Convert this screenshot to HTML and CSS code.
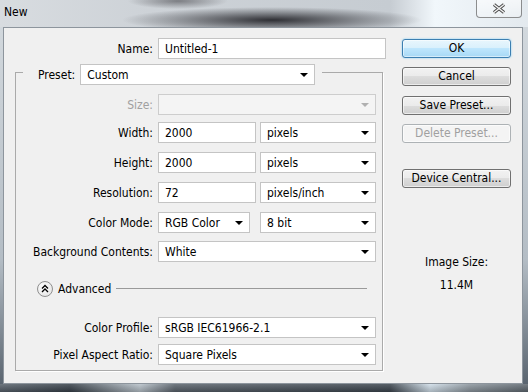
FILE: index.html
```html
<!DOCTYPE html>
<html lang="en">

<head>
    <meta charset="UTF-8">
    <title>New</title>
    <link rel="stylesheet" href="styles.css">
</head>

<body>
    <div class="window">
        <div class="titlebar">
            <span class="title">New</span>
            <button class="close">
                <svg width="16" height="11" viewBox="0 0 16 11">
                    <path d="M3 1.5 L13 9.5 M13 1.5 L3 9.5" stroke="#4a4a4a" stroke-width="3.4" fill="none" />
                    <path d="M3 1.5 L13 9.5 M13 1.5 L3 9.5" stroke="#f4f4f4" stroke-width="1.4" fill="none" />
                </svg>
            </button>
        </div>

        <div class="frame">
            <div class="client">
                <div class="main">
                    <div class="row">
                        <span class="lbl">Name:</span>
                        <div class="field w-name">Untitled-1</div>
                    </div>

                    <div class="group">
                        <div class="group-head">
                            <span class="head-lbl">Preset:</span>
                            <div class="field select w-preset">Custom</div>
                        </div>

                        <div class="row r-size">
                            <span class="lbl dim">Size:</span>
                            <div class="field select disabled w-full"></div>
                        </div>
                        <div class="row r-width">
                            <span class="lbl">Width:</span>
                            <div class="field w-num">2000</div>
                            <div class="field select w-unit">pixels</div>
                        </div>
                        <div class="row">
                            <span class="lbl">Height:</span>
                            <div class="field w-num">2000</div>
                            <div class="field select w-unit">pixels</div>
                        </div>
                        <div class="row">
                            <span class="lbl">Resolution:</span>
                            <div class="field w-num">72</div>
                            <div class="field select w-unit">pixels/inch</div>
                        </div>
                        <div class="row">
                            <span class="lbl">Color Mode:</span>
                            <div class="field select w-mode">RGB Color</div>
                            <div class="field select w-unit bits">8 bit</div>
                        </div>
                        <div class="row r-bg">
                            <span class="lbl">Background Contents:</span>
                            <div class="field select w-full">White</div>
                        </div>

                        <div class="advanced">
                            <span class="adv-btn">
                                <svg width="8" height="9" viewBox="0 0 8 9">
                                    <path d="M1 4.5 L4 1.5 L7 4.5 M1 8 L4 5 L7 8" stroke="#000" stroke-width="1.3" fill="none" />
                                </svg>
                            </span>
                            <span>Advanced</span>
                            <span class="adv-line"></span>
                        </div>

                        <div class="row r-profile">
                            <span class="lbl">Color Profile:</span>
                            <div class="field select w-full">sRGB IEC61966-2.1</div>
                        </div>
                        <div class="row r-pixel">
                            <span class="lbl">Pixel Aspect Ratio:</span>
                            <div class="field select w-full">Square Pixels</div>
                        </div>
                    </div>
                </div>

                <div class="side">
                    <button class="btn btn-default">OK</button>
                    <button class="btn">Cancel</button>
                    <button class="btn b-save">Save Preset...</button>
                    <button class="btn btn-disabled">Delete Preset...</button>
                    <button class="btn b-device">Device Central...</button>

                    <div class="image-size">
                        <div>Image Size:</div>
                        <div class="size-value">11.4M</div>
                    </div>
                </div>
            </div>
        </div>

        <div class="bottom"></div>
    </div>
</body>

</html>
```

FILE: styles.css
```css
html,
body {
    margin: 0
}

body {
    width: 528px;
    height: 392px;
    overflow: hidden;
    font: 12px "DejaVu Sans Condensed", "DejaVu Sans", sans-serif;
    color: #000;
}

.window {
    display: flex;
    flex-direction: column;
    height: 392px;
}

/* glass title bar */
.titlebar {
    height: 27px;
    display: flex;
    align-items: flex-start;
    justify-content: space-between;
    background:
        radial-gradient(150px 13px at 272px 20px, rgba(30, 30, 35, .9), rgba(30, 30, 35, .35) 60%, rgba(30, 30, 35, 0)),
        radial-gradient(50px 8px at 178px 1px, rgba(70, 70, 75, .6), rgba(70, 70, 75, 0)),
        linear-gradient(90deg, #d8dce0 0, #cdd2d7 150px, #c6ccd2 390px, #f1f7fb 435px, #e3e9ee 528px);
}

.title {
    margin: 5px 0 0 4px;
    line-height: 15px;
}

.close {
    width: 46px;
    height: 18px;
    margin-right: 6px;
    padding: 0;
    box-sizing: border-box;
    border: 1px solid rgba(70, 70, 70, .6);
    border-top: 0;
    border-radius: 0 0 4px 4px;
    background: linear-gradient(rgba(255, 255, 255, .6), rgba(255, 255, 255, .25));
    display: flex;
    align-items: center;
    justify-content: center;
}

.frame {
    height: 357px;
    padding: 0 5px 0 3px;
    display: flex;
    background: linear-gradient(180deg, #d2d8dd 0, #b4bdc5 65%, #5a6570 100%);
}

.client {
    flex: 1;
    display: flex;
    border: 1px solid #8d959d;
    background: #f0f0f0;
}

.bottom {
    height: 8px;
    background:
        linear-gradient(180deg, rgba(255, 255, 255, .15), rgba(0, 0, 0, .2)),
        linear-gradient(90deg, #56606a 0, #353e47 70px, #b6c0c8 140px, #58616a 175px, #3a434c 390px, #cfdde8 430px, #8a949c 470px, #5d666e 528px);
}

/* form */
.main {
    width: 398px;
    padding-top: 10px;
}

.row {
    display: flex;
    align-items: center;
    height: 21px;
}

.lbl {
    width: 149px;
    margin-right: 5px;
    text-align: right;
    white-space: nowrap;
}

.dim {
    color: #a0a0a0;
}

.field {
    box-sizing: border-box;
    height: 21px;
    padding-left: 6px;
    border: 1px solid #c4c4c4;
    background: #fff;
    display: flex;
    align-items: center;
    white-space: nowrap;
}

.select::after {
    content: "";
    margin-left: auto;
    margin-right: 6px;
    border-left: 4px solid transparent;
    border-right: 4px solid transparent;
    border-top: 4px solid #000;
}

.select.disabled {
    background: #f4f4f4;
    border-color: #cdcdcd;
}

.select.disabled::after {
    border-top-color: #b0b0b0;
}

.w-name {
    width: 228px;
}

.w-preset {
    width: 235px;
}

.w-full {
    width: 218px;
}

.w-num {
    width: 98px;
}

.w-unit {
    width: 116px;
    margin-left: 4px;
}

.w-mode {
    width: 92px;
}

.w-unit.bits {
    margin-left: 10px;
}

.group {
    margin: 13px 0 0 11px;
    width: 368px;
    box-sizing: border-box;
    padding-bottom: 5px;
    border: 1px solid #aaaaaa;
    box-shadow: 1px 1px 0 #fff;
}

.group .lbl {
    width: 137px;
}

.group .row {
    margin-top: 9px;
}

.group-head {
    display: flex;
    align-items: center;
    width: fit-content;
    margin: -9px 0 0 7px;
    padding: 0 7px 0 15px;
    background: #f0f0f0;
}

.head-lbl {
    margin-right: 5px;
}

.group .r-width {
    margin-top: 7px;
}

.group .r-bg {
    margin-top: 8px;
}

.advanced {
    display: flex;
    align-items: center;
    height: 17px;
    margin-top: 18px;
    padding: 0 15px 0 21px;
}

.adv-btn {
    width: 16px;
    height: 16px;
    box-sizing: border-box;
    margin-right: 5px;
    border: 1px solid #8f8f8f;
    border-radius: 50%;
    background: radial-gradient(circle at 40% 35%, #fff, #e0e0e0);
    display: flex;
    align-items: center;
    justify-content: center;
}

.adv-line {
    flex: 1;
    height: 1px;
    margin-left: 5px;
    background: #9a9a9a;
}

.group .r-profile {
    margin-top: 20px;
}

.group .r-pixel {
    margin-top: 6px;
}

/* buttons */
.side {
    width: 109px;
    padding-top: 11px;
    display: flex;
    flex-direction: column;
}

.btn {
    height: 19px;
    padding: 0;
    box-sizing: border-box;
    margin-bottom: 9px;
    border: 1px solid #707070;
    border-radius: 3px;
    background: linear-gradient(#f2f2f2 0, #ebebeb 50%, #dddddd 50%, #cfcfcf 100%);
    box-shadow: inset 0 0 0 1px rgba(255, 255, 255, .6);
    font: inherit;
    color: #000;
    line-height: 17px;
    text-align: center;
}

.btn-default {
    border-color: #3c7fb1;
    background: linear-gradient(#e8f6fd 0, #d9f0fc 48%, #bee6fd 50%, #a7d9f5 100%);
    box-shadow: inset 0 0 0 1px rgba(255, 255, 255, .5), 0 0 2px #6fc8f5;
}

.b-save {
    margin-top: 1px;
}

.btn-disabled {
    border-color: #adb2b5;
    background: #f4f4f4;
    color: #a0a0a0;
}

.b-device {
    margin-top: 17px;
}

.image-size {
    margin-top: 58px;
    text-align: center;
    line-height: 15px;
}

.size-value {
    margin-top: 8px;
}
```
